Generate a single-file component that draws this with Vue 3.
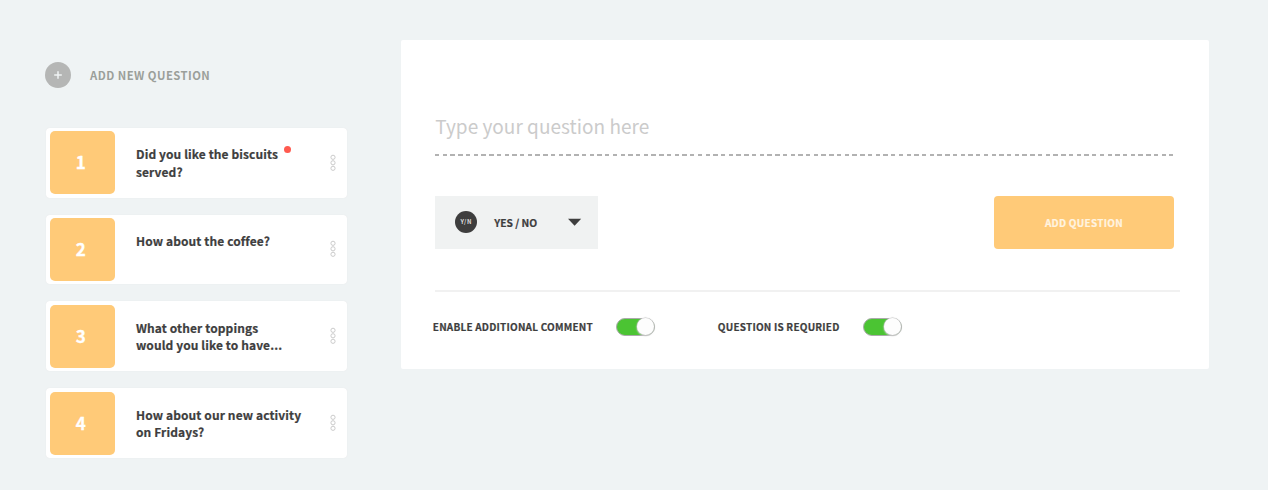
<template>
  <div class="survey-layout">
    <aside class="sidebar">
      <button class="add-new">
        <svg class="plus-icon" viewBox="0 0 26 26">
          <circle cx="13" cy="13" r="13" fill="#b5b6b5" />
          <path d="M13 9.2v7.6M9.2 13h7.6" stroke="#f0f3f4" stroke-width="1.5" />
        </svg>
        <span>ADD NEW QUESTION</span>
      </button>

      <ul class="question-list">
        <li v-for="(question, index) in questions" :key="index" class="question-card">
          <div class="question-number">{{ index + 1 }}</div>
          <p class="question-text">
            <span v-for="line in question.lines" :key="line">{{ line }}</span>
            <i v-if="question.required" class="required-dot"></i>
          </p>
          <svg class="menu-icon" viewBox="0 0 6 18">
            <circle v-for="cy in [3.3, 8.8, 14.3]" :key="cy" cx="3" :cy="cy" r="2.1" />
          </svg>
        </li>
      </ul>
    </aside>

    <main class="editor">
      <input v-model="draft" class="question-input" placeholder="Type your question here" />
      <div class="dashes"></div>

      <div class="editor-row">
        <button class="type-select">
          <span class="type-badge">Y/N</span>
          <span class="type-label">YES / NO</span>
          <svg class="caret" viewBox="0 0 14 8">
            <path d="M0 .8h13.2L6.6 7.8z" fill="#3e3e3e" />
          </svg>
        </button>
        <button class="add-btn" @click="addQuestion"><span>ADD QUESTION</span></button>
      </div>

      <footer class="options">
        <label class="option comment">
          <span>ENABLE ADDITIONAL COMMENT</span>
          <i class="toggle" :class="{ on: allowComment }" @click="allowComment = !allowComment"></i>
        </label>
        <label class="option required">
          <span>QUESTION IS REQURIED</span>
          <i class="toggle" :class="{ on: isRequired }" @click="isRequired = !isRequired"></i>
        </label>
      </footer>
    </main>
  </div>
</template>

<script setup>
import { ref } from 'vue'

const draft = ref('')
const allowComment = ref(true)
const isRequired = ref(true)

const questions = ref([
  { lines: ['Did you like the biscuits', 'served?'], required: true },
  { lines: ['How about the coffee?'] },
  { lines: ['What other toppings', 'would you like to have...'] },
  { lines: ['How about our new activity', 'on Fridays?'] },
])

function addQuestion() {
  if (!draft.value.trim()) return
  questions.value.push({ lines: [draft.value.trim()], required: isRequired.value })
  draft.value = ''
}
</script>

<style>
body {
  background: #eff3f4;
}
</style>

<style scoped>
.survey-layout {
  display: flex;
  align-items: flex-start;
  box-sizing: border-box;
  width: 1268px;
  height: 490px;
  padding: 40px 59px 0 45px;
  overflow: hidden;
  background: #eff3f4;
  color: #3e3e3e;
  font-family: "Noto Sans CJK SC", "Open Sans", sans-serif;
}

button,
input {
  border: none;
  padding: 0;
  background: none;
  color: inherit;
  font-family: inherit;
}

.sidebar {
  width: 302px;
  margin-right: 54.4px;
  padding-top: 22px;
}

.add-new {
  display: flex;
  align-items: center;
  height: 26px;
  color: #9b9f9a;
  font-size: 11.3px;
  font-weight: 700;
  letter-spacing: 0.45px;
  line-height: 26px;
}

.plus-icon {
  width: 26px;
  height: 26px;
  margin-right: 19px;
}

.question-list {
  display: flex;
  flex-direction: column;
  gap: 17px;
  margin: 39.8px 0 0;
  padding: 0 0 0 1px;
  list-style: none;
}

.question-card {
  display: flex;
  align-items: center;
  box-sizing: border-box;
  height: 69.8px;
  padding: 0 11.3px 0 3.5px;
  border-radius: 4px;
  background: #fff;
  box-shadow: 0 0 1px #e2e2e2;
}

.question-number {
  width: 65.5px;
  height: 63px;
  padding-right: 3px;
  box-sizing: border-box;
  border-radius: 5px;
  background: #ffca78;
  color: #fff;
  font-size: 17px;
  font-weight: 700;
  line-height: 61px;
  text-align: center;
  -webkit-text-stroke: 0.3px;
}

.question-text {
  position: relative;
  flex: 1;
  align-self: flex-start;
  margin: 17.6px 0 0 21px;
  font-size: 12px;
  font-weight: 700;
  letter-spacing: 0.1px;
  line-height: 17.5px;
  white-space: nowrap;
  -webkit-text-stroke: 0.2px;
}

.question-text span {
  display: block;
}

.required-dot {
  position: absolute;
  top: 0.2px;
  left: 148px;
  width: 7px;
  height: 7px;
  border-radius: 50%;
  background: #ff5a4f;
}

.menu-icon {
  width: 6px;
  height: 18px;
  fill: none;
  stroke: #cbcbcb;
  stroke-width: 1;
}

.editor {
  display: flex;
  flex-direction: column;
  box-sizing: border-box;
  width: 807.6px;
  height: 329px;
  padding: 70px 29px 0 33.8px;
  border-radius: 2px;
  background: #fff;
}

.question-input {
  width: 700px;
  height: 31px;
  outline: none;
  font-size: 19px;
  letter-spacing: 0.03px;
  line-height: 31px;
}

.question-input::placeholder {
  color: #cbcbcb;
  opacity: 1;
}

.dashes {
  width: 738px;
  height: 1.6px;
  margin-top: 13px;
  background: repeating-linear-gradient(90deg, #b2b2b2 0 4.4px, transparent 4.4px 7.73px);
}

.editor-row {
  display: flex;
  justify-content: space-between;
  width: 738.5px;
  margin-top: 40.4px;
}

.type-select {
  display: flex;
  align-items: center;
  width: 163px;
  height: 53px;
  padding-left: 20px;
  background: #f0f2f2;
}

.type-badge {
  width: 22px;
  height: 22px;
  border-radius: 50%;
  background: #3e3e3e;
  color: #ddd;
  font-size: 6px;
  font-weight: 700;
  letter-spacing: 0.5px;
  line-height: 22px;
  text-align: center;
}

.type-label {
  width: 74px;
  margin-left: 17px;
  font-size: 10.3px;
  font-weight: 700;
  text-align: left;
  -webkit-text-stroke: 0.2px;
}

.caret {
  width: 14px;
  height: 8px;
}

.add-btn {
  width: 179.5px;
  height: 53px;
  border-radius: 4px;
  background: #ffca78;
  color: #fff4e0;
  font-size: 10px;
  font-weight: 700;
  letter-spacing: 0.25px;
  -webkit-text-stroke: 0.2px;
}

.options {
  display: flex;
  align-items: center;
  height: 70px;
  margin-top: 41px;
  border-top: 2px solid #f1f1f1;
  font-size: 10px;
  font-weight: 700;
  letter-spacing: 0.2px;
  white-space: nowrap;
  -webkit-text-stroke: 0.2px;
}

.option {
  display: flex;
  align-items: center;
  justify-content: space-between;
}

.option.comment {
  width: 222px;
  margin-left: -2.4px;
}

.option.required {
  width: 184px;
  margin-left: 63px;
}

.toggle {
  display: flex;
  box-sizing: border-box;
  width: 39px;
  height: 18px;
  border: 1px solid #aaa;
  border-radius: 9px;
  background: #ddd;
}

.toggle.on {
  justify-content: flex-end;
  background: #4bc433;
}

.toggle::after {
  content: "";
  width: 17px;
  height: 17px;
  margin: -0.5px -0.5px 0 0;
  border-radius: 50%;
  background: #fdfdfd;
  box-shadow: 0 0 1px 0.5px #bbb, 0 1px 2px #ddd;
}
</style>
